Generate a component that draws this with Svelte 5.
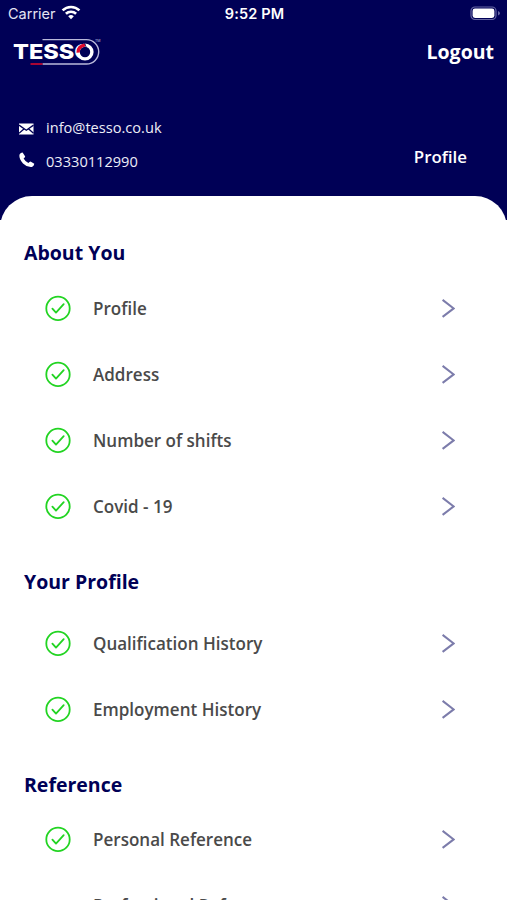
<script>
  const sections = [
    { title: 'About You', gap: 8, items: ['Profile', 'Address', 'Number of shifts', 'Covid - 19'] },
    { title: 'Your Profile', gap: 14, items: ['Qualification History', 'Employment History'] },
    { title: 'Reference', gap: 7, items: ['Personal Reference', 'Professional Reference'] },
  ]
  const pending = ['Professional Reference']
</script>

<div class="screen">
  <header>
    <div class="status">
      <div class="carrier">
        <span>Carrier</span>
        <svg width="20" height="15" viewBox="0 0 20 15" fill="none" stroke="#fff" stroke-width="2.6">
          <path d="M1.6 5.4a12 12 0 0 1 16.8 0" />
          <path d="M4.9 8.8a7.3 7.3 0 0 1 10.2 0" />
          <path d="M10 14.2 7.2 11.3a4 4 0 0 1 5.6 0z" fill="#fff" stroke="none" />
        </svg>
      </div>
      <span class="time">9:52 PM</span>
      <svg class="battery" width="31" height="15" viewBox="0 0 31 15">
        <rect x="1" y="1" width="25" height="12.5" rx="4" fill="none" stroke="#6666a3" stroke-width="1.2" />
        <rect x="2.6" y="2.6" width="21.8" height="9.3" rx="2.4" fill="#fff" />
        <path d="M28 5v4.5q2-1 2-2.25T28 5z" fill="#6666a3" />
      </svg>
    </div>

    <nav>
      <svg class="logo" width="90" height="28" viewBox="0 0 90 28">
        <path d="M29.5 1.6H73.5a12.2 12.2 0 0 1 0 24.4H29.5" fill="none" stroke="#b9b9da" stroke-width="1.4" />
        <path d="M17.5 26H29.5" stroke="#d4082c" stroke-width="1.6" />
        <text class="word" x="0" y="21.4" textLength="79.5" lengthAdjust="spacingAndGlyphs">TESSO</text>
        <circle cx="72" cy="14" r="6.9" fill="#000056" stroke="#fff" stroke-width="3.4" />
        <path d="M65.1 14.6a6.9 6.9 0 0 1 7.1-7.5" fill="none" stroke="#e0082c" stroke-width="3.4" />
        <path d="M71.5 5 73.3 9.4" stroke="#000056" stroke-width="0.8" />
        <text class="tm" x="82" y="4">TM</text>
      </svg>
      <span class="logout">Logout</span>
    </nav>

    <div class="contact">
      <div class="lines">
        <div class="line">
          <svg class="envelope" width="16" height="14" viewBox="0 0 16 14">
            <rect x="0" y="1.5" width="14.5" height="11" fill="#fff" />
            <path d="M0 3.1 7.3 8.3 14.5 3.1M0 11.3 4.9 6.9M14.5 11.3 9.7 6.9" fill="none" stroke="#000056" stroke-width="1.3" />
          </svg>
          <span>info@tesso.co.uk</span>
        </div>
        <div class="line">
          <svg class="handset" width="16" height="16" viewBox="0 0 16 16">
            <path
              d="M.4 2.8Q1.6.6 3.6.6L6.2 4.4Q6 5.4 4.6 6.4Q6.2 9.4 9.4 11.1Q10.5 9.7 11.5 9.5L15.3 11.8Q15.3 13.6 13 15Q8.3 15.7 4 11.5Q0 7.2 .4 2.8z"
              fill="#fff"
            />
          </svg>
          <span>03330112990</span>
        </div>
      </div>
      <span class="profile">Profile</span>
    </div>
  </header>

  <main>
    {#each sections as { title, gap, items }}
      <section>
        <h2 style:margin-bottom="{gap}px">{title}</h2>
        {#each items as item}
          <div class="row">
            <svg class="check" width="26" height="26" viewBox="0 0 26 26">
              {#if !pending.includes(item)}
                <circle cx="13" cy="13.4" r="11.7" />
                <path d="M7.4 13.6 11 17.6 18.7 9.2" />
              {/if}
            </svg>
            <span class="label">{item}</span>
            <svg class="arrow" width="14" height="20" viewBox="0 0 14 20">
              <path d="M1.6 1.9 12.7 10.4 1.6 18.9" />
            </svg>
          </div>
        {/each}
      </section>
    {/each}
  </main>
</div>

<style>
  :global(body) {
    background: #fff;
    overflow: hidden;
  }

  .screen {
    font-family: 'Open Sans', sans-serif;
    flex-direction: column;
    overflow: hidden;
    display: flex;
    height: 900px;
  }

  header {
    background: #000056;
    flex-shrink: 0;
    height: 220px;
    color: #fff;
  }

  .status {
    grid-template-columns: 1fr auto 1fr;
    font-family: Inter, sans-serif;
    box-sizing: border-box;
    align-items: center;
    padding: 0 6px 0 8px;
    display: grid;
    height: 27px;
  }

  .carrier {
    align-items: center;
    font-size: 14.5px;
    display: flex;
    gap: 5px;
    color: #e4e4f2;
  }

  .carrier svg {
    margin-top: -2px;
  }

  .time {
    letter-spacing: 0.15px;
    font-weight: 600;
    font-size: 14.5px;
  }

  .battery {
    justify-self: end;
  }

  nav {
    justify-content: space-between;
    padding: 10px 13px 0 13px;
    align-items: center;
    display: flex;
  }

  .logo {
    overflow: visible;
  }

  .word {
    font: 800 20.5px Inter, sans-serif;
    fill: #fff;
  }

  .tm {
    font: 3.5px Inter, sans-serif;
    fill: #c9c9e4;
  }

  .logout {
    line-height: 28px;
    font-weight: 700;
    font-size: 19.5px;
    margin-top: 1px;
  }

  .contact {
    justify-content: space-between;
    padding: 44px 40px 0 19px;
    align-items: flex-end;
    display: flex;
  }

  .line {
    align-items: center;
    font-size: 14.6px;
    display: flex;
    height: 34px;
    gap: 11px;
    color: #ededf7;
  }

  .envelope {
    margin-top: 3px;
  }

  .handset {
    margin-top: -3px;
  }

  .profile {
    line-height: 24px;
    margin-bottom: 9px;
    font-weight: 600;
    font-size: 16.9px;
  }

  main {
    border-radius: 32px 32px 0 0;
    padding: 43px 24px 0;
    background: #fff;
    margin-top: -24px;
  }

  section {
    margin-bottom: 29px;
  }

  h2 {
    line-height: 28px;
    font-weight: 700;
    font-size: 19.5px;
    color: #000056;
    margin: 0;
  }

  .row {
    padding: 0 28px 0 21px;
    align-items: center;
    display: flex;
    height: 66px;
  }

  .check {
    stroke-linejoin: round;
    stroke-linecap: round;
    stroke-width: 1.8;
    stroke: #22d422;
    fill: none;
  }

  .label {
    margin-left: 22px;
    font-weight: 600;
    font-size: 17.05px;
    color: #4a4a4a;
    flex: 1;
  }

  .arrow {
    stroke-width: 2;
    stroke: #7c7cab;
    fill: none;
  }
</style>
